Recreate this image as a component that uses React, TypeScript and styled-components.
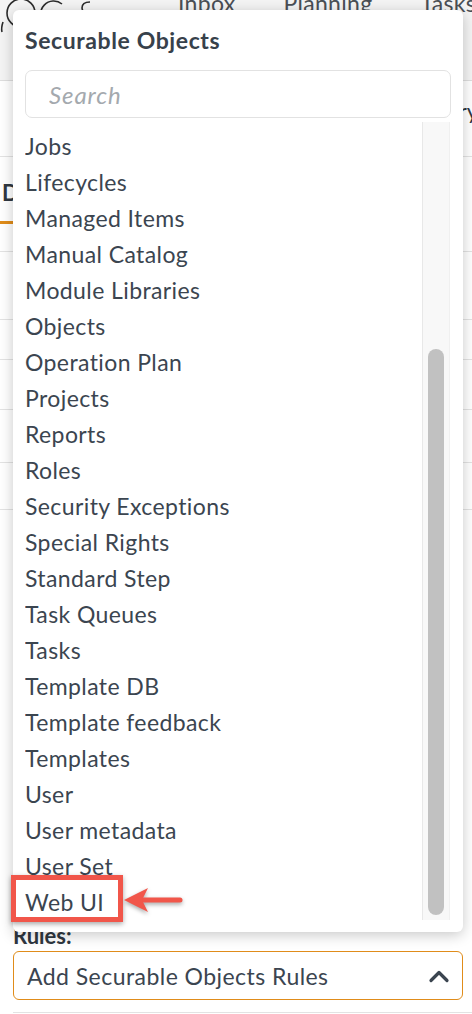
import styled, { createGlobalStyle } from 'styled-components';

const FONT = "Lato, 'Open Sans', Arial, sans-serif";
const INK = '#3b4550';

const GlobalStyle = createGlobalStyle`
  html, body {
    margin: 0;
    padding: 0;
    background: #ffffff;
  }
  body {
    font-family: ${FONT};
    color: ${INK};
    overflow: hidden;
  }
`;

const items = [
  'Jobs',
  'Lifecycles',
  'Managed Items',
  'Manual Catalog',
  'Module Libraries',
  'Objects',
  'Operation Plan',
  'Projects',
  'Reports',
  'Roles',
  'Security Exceptions',
  'Special Rights',
  'Standard Step',
  'Task Queues',
  'Tasks',
  'Template DB',
  'Template feedback',
  'Templates',
  'User',
  'User metadata',
  'User Set',
  'Web UI',
];

const Page = styled.div`
  position: relative;
  width: 472px;
  height: 1014px;
  overflow: hidden;
  background: #ffffff;
`;

const Header = styled.header`
  height: 81px;
  box-sizing: border-box;
  background: #f4f4f4;
  border-bottom: 1px solid #dedede;
  display: flex;
  align-items: flex-start;
`;

const Logo = styled.svg`
  flex: none;
  width: 110px;
  height: 40px;
`;

const Nav = styled.nav`
  display: flex;
  gap: 48px;
  margin-left: 68px;
  margin-top: -11px;
  font-size: 23px;
  letter-spacing: 0.3px;
  color: #4a4f55;
  white-space: nowrap;
`;

const Row = styled.div<{ $h: number }>`
  height: ${(p) => p.$h}px;
  box-sizing: border-box;
  border-bottom: 1px solid #e3e3e3;
  display: flex;
  align-items: center;
`;

const SideLabel = styled.span`
  margin-left: auto;
  margin-right: -6px;
  margin-top: -16px;
  font-size: 22px;
  color: #2f3740;
`;

const Tab = styled.div`
  align-self: stretch;
  display: flex;
  align-items: center;
  padding: 6px 2px 0 2px;
  margin-bottom: 27px;
  border-bottom: 3px solid #e08c1a;
  font-size: 22px;
  font-weight: 700;
  color: #2f3740;
`;

const Spacer = styled.div<{ $h: number }>`
  height: ${(p) => p.$h}px;
`;

const FieldLabel = styled.div`
  padding-left: 13px;
  height: 28px;
  font-size: 22px;
  font-weight: 700;
  line-height: 26px;
  color: #2f3740;
`;

const SelectBox = styled.div`
  margin: 0 9px 0 13px;
  height: 49px;
  box-sizing: border-box;
  border: 1px solid #e08c1a;
  border-radius: 6px;
  display: flex;
  align-items: center;
  justify-content: space-between;
  padding: 0 12px 0 13px;
  font-size: 23px;
  letter-spacing: 0.45px;
  color: ${INK};
`;

const BottomRule = styled.div`
  margin: 12px 0 0 13px;
  border-top: 1px solid #e3e3e3;
`;

const Popup = styled.div`
  position: absolute;
  left: 13px;
  top: 10px;
  width: 450px;
  height: 922px;
  box-sizing: border-box;
  background: #ffffff;
  border-radius: 6px;
  box-shadow: 0 3px 14px rgba(0, 0, 0, 0.22);
  padding: 16px 12px 12px 12px;
  display: flex;
  flex-direction: column;
`;

const Title = styled.h3`
  margin: 0 0 16px 0;
  font-size: 23px;
  font-weight: 700;
  letter-spacing: 0.6px;
  line-height: 28px;
  color: #37414b;
`;

const Search = styled.input`
  flex: none;
  height: 48px;
  box-sizing: border-box;
  border: 1px solid #e2e2e2;
  border-radius: 7px;
  padding: 0 23px;
  font-family: ${FONT};
  font-size: 24px;
  font-style: italic;
  letter-spacing: 0.9px;
  color: ${INK};
  outline: none;
  &::placeholder {
    color: #a4a9ae;
  }
`;

const ListArea = styled.div`
  flex: 1;
  margin-top: 4px;
  margin-right: 1px;
  display: flex;
  min-height: 0;
`;

const List = styled.ul`
  flex: 1;
  list-style: none;
  margin: 0;
  padding: 6px 0 0 0;
  overflow: hidden;
`;

const Item = styled.li`
  height: 36px;
  line-height: 36px;
  font-size: 23px;
  letter-spacing: 0.4px;
  color: ${INK};
  white-space: nowrap;
`;

const Track = styled.div`
  flex: none;
  width: 28px;
  box-sizing: border-box;
  background: #f8f8f8;
  border-left: 1px solid #e8e8e8;
  border-right: 1px solid #f0f0f0;
  display: flex;
  justify-content: center;
`;

const Thumb = styled.div<{ $top: number; $h: number }>`
  width: 16px;
  margin-top: ${(p) => p.$top}px;
  height: ${(p) => p.$h}px;
  border-radius: 8px;
  background: #c1c1c1;
`;

const Highlight = styled.div`
  position: absolute;
  left: 11px;
  top: 875px;
  width: 112px;
  height: 47px;
  box-sizing: border-box;
  border: 5px solid #f1564a;
  box-shadow: 0 2px 5px rgba(0, 0, 0, 0.35);
`;

const Arrow = styled.svg`
  position: absolute;
  left: 118px;
  top: 884px;
  width: 72px;
  height: 34px;
  overflow: visible;
  filter: drop-shadow(0 2px 2px rgba(0, 0, 0, 0.35));
`;

const Chevron = () => (
  <svg width="22" height="14" viewBox="0 0 22 14" fill="none">
    <path d="M3 11.5 L11 3.5 L19 11.5" stroke={INK} strokeWidth="3.2" strokeLinecap="round" strokeLinejoin="round" />
  </svg>
);

export default function App() {
  return (
    <>
      <GlobalStyle />
      <Page>
        <Header>
          <Logo viewBox="0 0 110 40">
            <path d="M3 22 Q1 28 2 32" stroke="#2b2b2b" strokeWidth="1.6" fill="none" />
            <circle cx="21" cy="13" r="14" stroke="#2b2b2b" strokeWidth="1.6" fill="none" />
            <path d="M62 4 A13 13 0 1 0 62 24" stroke="#2b2b2b" strokeWidth="1.6" fill="none" />
            <path d="M90 2 Q82 2 82 8 Q82 12 88 14" stroke="#2b2b2b" strokeWidth="1.6" fill="none" />
          </Logo>
          <Nav>
            <span>Inbox</span>
            <span>Planning</span>
            <span>Tasks</span>
          </Nav>
        </Header>
        <Row $h={76}>
          <SideLabel>History</SideLabel>
        </Row>
        <Row $h={95}>
          <Tab>Details</Tab>
        </Row>
        <Row $h={68} />
        <Row $h={40} />
        <Row $h={50} />
        <Row $h={53} />
        <Row $h={47} />
        <Spacer $h={413} />
        <FieldLabel>Rules:</FieldLabel>
        <SelectBox>
          <span>Add Securable Objects Rules</span>
          <Chevron />
        </SelectBox>
        <BottomRule />

        <Popup>
          <Title>Securable Objects</Title>
          <Search placeholder="Search" />
          <ListArea>
            <List>
              {items.map((name) => (
                <Item key={name}>{name}</Item>
              ))}
            </List>
            <Track>
              <Thumb $top={227} $h={566} />
            </Track>
          </ListArea>
        </Popup>

        <Highlight />
        <Arrow viewBox="0 0 72 34">
          <path d="M24 16 L62 16" stroke="#f1564a" strokeWidth="5" strokeLinecap="round" />
          <path d="M6 16 L30 4 L24 16 L30 28 Z" fill="#f1564a" />
        </Arrow>
      </Page>
    </>
  );
}
